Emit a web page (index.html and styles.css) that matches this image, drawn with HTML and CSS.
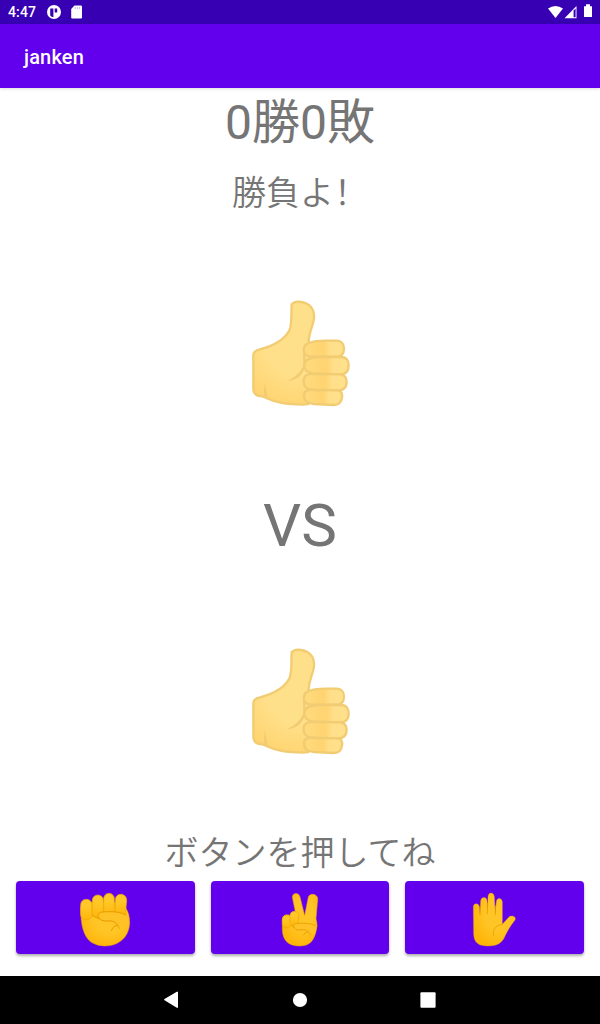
FILE: index.html
```html
<!DOCTYPE html>
<html lang="ja">
<head>
<meta charset="utf-8">
<title>janken</title>
<link rel="stylesheet" href="styles.css">
</head>
<body>
<svg class="defs" width="0" height="0">
  <defs>
    <radialGradient id="palm" gradientUnits="userSpaceOnUse" cx="195" cy="170" r="200">
      <stop offset=".5" stop-color="#ffe08a"/><stop offset="1" stop-color="#ffd470"/>
    </radialGradient>
    <linearGradient id="finger" x1="0" x2="1" y1="0" y2="0">
      <stop offset="0" stop-color="#ffdb7e"/><stop offset=".5" stop-color="#ffd370"/><stop offset=".66" stop-color="#ffdf89"/><stop offset="1" stop-color="#ffe08c"/>
    </linearGradient>
    <radialGradient id="gold" cx=".58" cy=".4" r=".65">
      <stop offset=".45" stop-color="#ffc526"/><stop offset="1" stop-color="#ffb406"/>
    </radialGradient>
    <linearGradient id="tip" x1="0" x2="0" y1="0" y2="1">
      <stop offset=".35" stop-color="#ffc728"/><stop offset="1" stop-color="#ffb60d"/>
    </linearGradient>
    <symbol id="thumb" viewBox="0 0 390 405">
      <path d="M170 58Q180 47 199 51C223 55 239 71 237 99C235 122 222 140 221 170L240 330Q235 359 205 359C155 357 125 355 96 340Q90 336 82 334C62 334 55 323 55 310V210Q56 197 75 193C115 182 151 162 164 134C172 112 168 79 170 58Z" fill="url(#palm)" stroke="#f2cc72" stroke-width="7" stroke-linejoin="round"/>
      <path d="M208 175Q217 190 211 219C216 257 194 287 156 288Q190 274 205 243L204 195Z" fill="#f2cc72"/>
      <path d="M90 290Q86 313 87 334L99 338Q92 314 90 290Z" fill="#f2cc72"/>
      <g fill="url(#finger)" stroke="#f2cc72" stroke-width="7">
        <path d="M207 190C211 169 245 167 271 167H304C321 167 327 179 327 191C327 207 319 215 302 215H230C210 215 204 203 207 190Z"/>
        <path d="M208 239C209 220 230 217 251 216H318C335 216 342 228 341 243C341 260 332 268 315 268L231 265Q207 261 208 239Z"/>
        <path d="M206 291C204 272 218 265 236 267L313 268C328 268 335 278 335 291C335 307 325 316 309 316L232 314Q207 313 206 291Z"/>
        <path d="M207 333C206 319 217 313 236 315L307 316C319 316 323 327 321 338C319 353 311 360 297 360L236 357Q208 354 207 333Z"/>
      </g>
    </symbol>
    <symbol id="rock" viewBox="0 0 210 228">
      <path d="M32 81C32 137 41 170 64 187Q81 198 104 198C149 198 178 169 179 127Q179 101 167 83L148 67H67Z" fill="url(#gold)" stroke="#f2aa00" stroke-width="1.5"/>
      <g fill="url(#tip)" stroke="#efa800" stroke-width="2">
        <rect x="32" y="58" width="34" height="61" rx="16"/>
        <rect x="67" y="45" width="33" height="68" rx="16"/>
        <rect x="101" y="40" width="32" height="70" rx="16"/>
        <path d="M136 60C136 37 170 37 170 62L166 103H136Z"/>
      </g>
      <path d="M66 105Q75 114 88 115C80 106 84 97 97 96C123 94 150 94 170 107Q181 126 165 145L139 139Q128 121 108 124Q94 124 87 115" fill="#ffc226"/>
      <path d="M66 105Q75 114 88 115C80 106 84 97 97 96C123 94 150 94 169 106M87 115Q94 124 108 123C130 121 141 126 148 146M142 136Q129 138 124 153" fill="none" stroke="#e79c00" stroke-width="3"/>
    </symbol>
    <symbol id="scissors" viewBox="0 0 210 228">
      <path d="M82 52C82 38 101 36 105 51L119 107L129 56C131 36 160 41 158 59L153 116Q160 136 152 159C144 187 130 198 104 198C69 198 53 180 52 149V117Q54 103 71 105L96 119Z" fill="url(#gold)" stroke="#f2aa00" stroke-width="1.5"/>
      <rect x="52" y="105" width="27" height="38" rx="13" fill="url(#tip)" stroke="#efa800" stroke-width="2"/>
      <rect x="75" y="94" width="26" height="43" rx="13" fill="url(#tip)" stroke="#efa800" stroke-width="2"/>
      <path d="M79 136Q87 139 87 141C83 133 88 130 99 130Q136 127 153 139L150 161L134 158Q121 149 99 151Q88 150 87 141" fill="#ffc226"/>
      <path d="M79 136L88 143C83 133 88 130 99 130Q136 127 153 138M88 143Q90 151 104 150C124 148 129 151 137 166M130 155Q119 156 115 166" fill="none" stroke="#e79c00" stroke-width="2.5"/>
    </symbol>
    <symbol id="paper" viewBox="0 0 210 228">
      <path d="M40 80C40 68 57 68 58 80L60 104L62 63C63 49 81 49 81 63L82.500 100L84 51C84 35 102 35 103 51L106 104L109 65C110 52 126 52 127 66V133L145 113C154 104 170 109 165 120C153 135 143 151 135 168C127 189 111 198 84 198C54 198 42 187 41 162Z" fill="url(#gold)" stroke="#f2aa00" stroke-width="1"/>
      <path d="M60 106V80M82 103V68M106 106V76" fill="none" stroke="#efa800" stroke-width="2.5"/>
      <path d="M127 133C108 136 97 148 101 167" fill="none" stroke="#e9a200" stroke-width="2.5"/>
    </symbol>
  </defs>
</svg>
<div class="screen">
  <header class="status">
    <span class="clock">4:47</span>
    <svg class="notice" width="14" height="14" viewBox="0 0 14 14"><circle cx="7" cy="7" r="7" fill="#fff"/><path d="M3.2 3.6H6.4V12.2Q4.5 12 3.2 10.5ZM7.7 3.6H10.2V7.5H7.7Z" fill="#3700b3"/></svg>
    <svg class="card" width="11" height="14" viewBox="0 0 11 14"><path d="M3.5.5H10Q11 .5 11 1.5V12.3Q11 13.5 10 13.5H1.300Q.2 13.5.2 12.3V4Z" fill="#fff"/><path d="M4.2 2V4M6.4 2V4M8.6 2V4" stroke="#c3b3eb" stroke-width=".9"/></svg>
    <svg class="signals" width="48" height="16" viewBox="0 0 48 16"><path d="M0 4.5Q7.5-.6 15 4.5L7.5 14Z" fill="#fff"/><path d="M16.500 14.2L28.5 2V14.2Z" fill="#fff"/><path d="M25.6 6.6L27.6 4.6V13.3H25.6Z" fill="#3700b3"/><path d="M36 2.200H38V.2H42V2.2H44V13H36Z" fill="#fff"/></svg>
  </header>
  <div class="appbar"><h1>janken</h1></div>
  <main class="game">
    <p class="score">0勝0敗</p>
    <p class="message">勝負よ<span class="bang" lang="zh-Hans">！</span></p>
    <svg class="hand enemy"><use href="#thumb"/></svg>
    <p class="versus">VS</p>
    <svg class="hand player"><use href="#thumb"/></svg>
    <p class="prompt">ボタンを押してね</p>
    <div class="choices">
      <button class="choice" aria-label="グー"><svg class="pick"><use href="#rock"/></svg></button>
      <button class="choice" aria-label="チョキ"><svg class="pick"><use href="#scissors"/></svg></button>
      <button class="choice" aria-label="パー"><svg class="pick"><use href="#paper"/></svg></button>
    </div>
  </main>
  <nav class="navbar">
    <svg width="16" height="18" viewBox="0 0 16 18"><path d="M.5 8Q-.3 8.6.5 9.2L12.8 16.8H14V.8H12.8Z" fill="#fff"/></svg>
    <svg width="16" height="18" viewBox="0 0 16 18"><circle cx="8" cy="9" r="7.1" fill="#fff"/></svg>
    <svg width="16" height="18" viewBox="0 0 16 18"><rect x=".4" y="1.3" width="15.2" height="15.4" rx="1" fill="#fff"/></svg>
  </nav>
</div>
</body>
</html>
```
FILE: styles.css
```css
* { box-sizing: border-box; }
body { margin: 0; background: #fff; font-family: Roboto, "Noto Sans CJK JP", sans-serif; color: #757575; }
p { margin: 0; white-space: nowrap; flex: none; }
.defs { position: absolute; }
.screen { width: 600px; height: 1024px; display: flex; flex-direction: column; overflow: hidden; }
.status { height: 24px; flex: none; display: flex; align-items: center; padding: 0 4px 0 8px; background: #3700b3; color: #fff; }
.clock { font-size: 14px; font-weight: 500; width: 39px; line-height: 24px; letter-spacing: .15px; }
.card { margin-left: 10px; }
.signals { margin-left: auto; margin-top: -1px; }
.appbar { height: 64px; flex: none; display: flex; align-items: center; padding: 2px 24px 0; background: #6200ee; color: #fff; box-shadow: 0 1px 3px rgba(0, 0, 0, .14); }
.appbar h1 { margin: 0; font-size: 20px; font-weight: 500; letter-spacing: .15px; }
.game { height: 888px; flex: none; display: flex; flex-direction: column; align-items: center; }
.score { font-size: 48px; line-height: 68px; height: 80px; padding-top: 1px; }
.message { font-size: 34px; font-weight: 350; line-height: 46px; height: 117px; }
.bang { font-family: "Noto Sans CJK SC", sans-serif; }
.hand { width: 130px; height: 135px; flex: none; }
.versus { font-size: 60px; line-height: 80px; height: 148px; padding-top: 66px; margin-bottom: 65px; }
.prompt { font-size: 34px; font-weight: 350; line-height: 50px; height: 48px; margin-top: 60px; }
.choices { width: 568px; display: grid; grid-template-columns: repeat(3, 1fr); gap: 16px; margin-top: 5px; }
.choice { height: 73px; display: flex; align-items: center; justify-content: center; padding: 0; border: 0; border-radius: 4px; background: #6200ee; box-shadow: 0 2px 3px rgba(0, 0, 0, .32); }
.pick { width: 70px; height: 76px; flex: none; }
.navbar { height: 48px; flex: none; display: flex; align-items: center; justify-content: space-between; padding: 0 164px; background: #000; }
```
